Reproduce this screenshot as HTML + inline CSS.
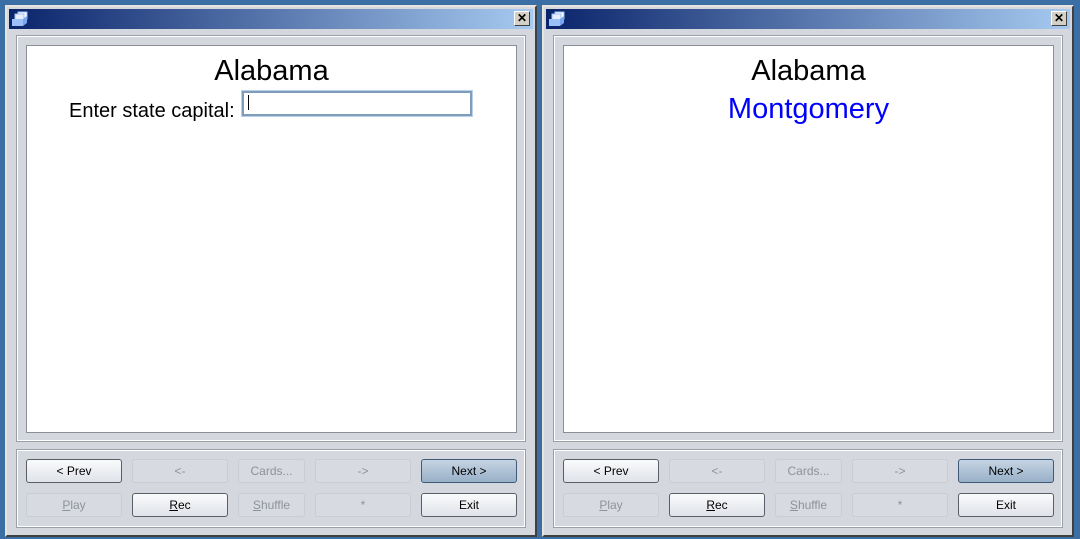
<!DOCTYPE html><html><head><style>
body{margin:0;width:1080px;height:539px;background:#3a6ea5;position:relative;overflow:hidden;font-family:"Liberation Sans",sans-serif}
.win{position:absolute;top:5px;width:532px;height:532px;background:#d4d7de;border-top:2px solid #e6e4dc;border-left:2px solid #e6e4dc;border-right:2px solid #404040;border-bottom:2px solid #404040;box-sizing:border-box}
.tb{position:absolute;left:2px;top:2px;right:2px;height:20px;background:linear-gradient(90deg,#0a246a,#a6caf0)}
.cl{position:absolute;right:3px;top:2px;width:16px;height:15px;background:#d4d0c8;border:1px solid;border-color:#fff #404040 #404040 #fff;box-sizing:border-box;font:bold 12px/13px "Liberation Sans";text-align:center;color:#000}
.ic{position:absolute;left:2px;top:2px}
.p1{position:absolute;left:9px;top:28px;width:510px;height:407px;border:1px solid #9aa0a8;box-shadow:inset 0 0 0 1px #fff;box-sizing:border-box}
.wh{position:absolute;left:19px;top:38px;width:491px;height:388px;background:#fff;border:1px solid #8a8f96;box-sizing:border-box}
.p2{position:absolute;left:9px;top:442px;width:510px;height:79px;border:1px solid #9aa0a8;box-shadow:inset 0 0 0 1px #fff;box-sizing:border-box}
.b{position:absolute;height:24px;box-sizing:border-box;border-radius:3px;font-size:12px;line-height:23px;text-align:center}
.en{border:1px solid #5a5e66;background:linear-gradient(#fafbfc,#dfe2e8);color:#000}
.ds{border:1px solid #c8ccd3;background:#d7dae0;color:#8e929a}
.nx{border:1px solid #3e5a78;background:linear-gradient(#c5d4e3,#98b0c8);color:#000}
.t{position:absolute;left:0;width:100%;text-align:center;font-size:29px}
</style></head><body>

<div class="win" style="left:5px">
<div class="tb"><svg class="ic" width="18" height="16"><rect x="7" y="1" width="9" height="7" fill="#fff" stroke="#9cc0f8"/><rect x="4" y="3" width="9" height="7" fill="#e8f0ff" stroke="#9cc0f8"/><path d="M1 8h11l4-3v7l-4 3H1z" fill="#7aa6f0"/><rect x="1" y="8" width="11" height="7" fill="#9cc0f8"/></svg><div class="cl">✕</div></div>
<div class="p1"></div>
<div class="wh">
<div class="t" style="top:9px">Alabama</div>
<div style="position:absolute;left:42px;top:54px;font-size:20px">Enter state capital:</div>
<div style="position:absolute;left:215px;top:45px;width:230px;height:25px;border:2px solid #7f9db9;box-shadow:0 0 0 1px #b8d0ea;box-sizing:border-box"><div style="position:absolute;left:4px;top:2px;width:1px;height:15px;background:#000"></div></div>
</div>
<div class="p2"></div>
<div class="b en" style="left:19px;top:452px;width:96px">&lt; Prev</div>
<div class="b ds" style="left:125px;top:452px;width:96px">&lt;-</div>
<div class="b ds" style="left:231px;top:452px;width:67px">Cards...</div>
<div class="b ds" style="left:308px;top:452px;width:96px">-&gt;</div>
<div class="b nx" style="left:414px;top:452px;width:96px">Next &gt;</div>
<div class="b ds" style="left:19px;top:486px;width:96px"><u>P</u>lay</div>
<div class="b en" style="left:125px;top:486px;width:96px"><u>R</u>ec</div>
<div class="b ds" style="left:231px;top:486px;width:67px"><u>S</u>huffle</div>
<div class="b ds" style="left:308px;top:486px;width:96px">*</div>
<div class="b en" style="left:414px;top:486px;width:96px">Exit</div>
</div>

<div class="win" style="left:542px">
<div class="tb"><svg class="ic" width="18" height="16"><rect x="7" y="1" width="9" height="7" fill="#fff" stroke="#9cc0f8"/><rect x="4" y="3" width="9" height="7" fill="#e8f0ff" stroke="#9cc0f8"/><path d="M1 8h11l4-3v7l-4 3H1z" fill="#7aa6f0"/><rect x="1" y="8" width="11" height="7" fill="#9cc0f8"/></svg><div class="cl">✕</div></div>
<div class="p1"></div>
<div class="wh">
<div class="t" style="top:9px">Alabama</div>
<div class="t" style="top:47px;color:#0000ff">Montgomery</div>
</div>
<div class="p2"></div>
<div class="b en" style="left:19px;top:452px;width:96px">&lt; Prev</div>
<div class="b ds" style="left:125px;top:452px;width:96px">&lt;-</div>
<div class="b ds" style="left:231px;top:452px;width:67px">Cards...</div>
<div class="b ds" style="left:308px;top:452px;width:96px">-&gt;</div>
<div class="b nx" style="left:414px;top:452px;width:96px">Next &gt;</div>
<div class="b ds" style="left:19px;top:486px;width:96px"><u>P</u>lay</div>
<div class="b en" style="left:125px;top:486px;width:96px"><u>R</u>ec</div>
<div class="b ds" style="left:231px;top:486px;width:67px"><u>S</u>huffle</div>
<div class="b ds" style="left:308px;top:486px;width:96px">*</div>
<div class="b en" style="left:414px;top:486px;width:96px">Exit</div>
</div>
</body></html>
